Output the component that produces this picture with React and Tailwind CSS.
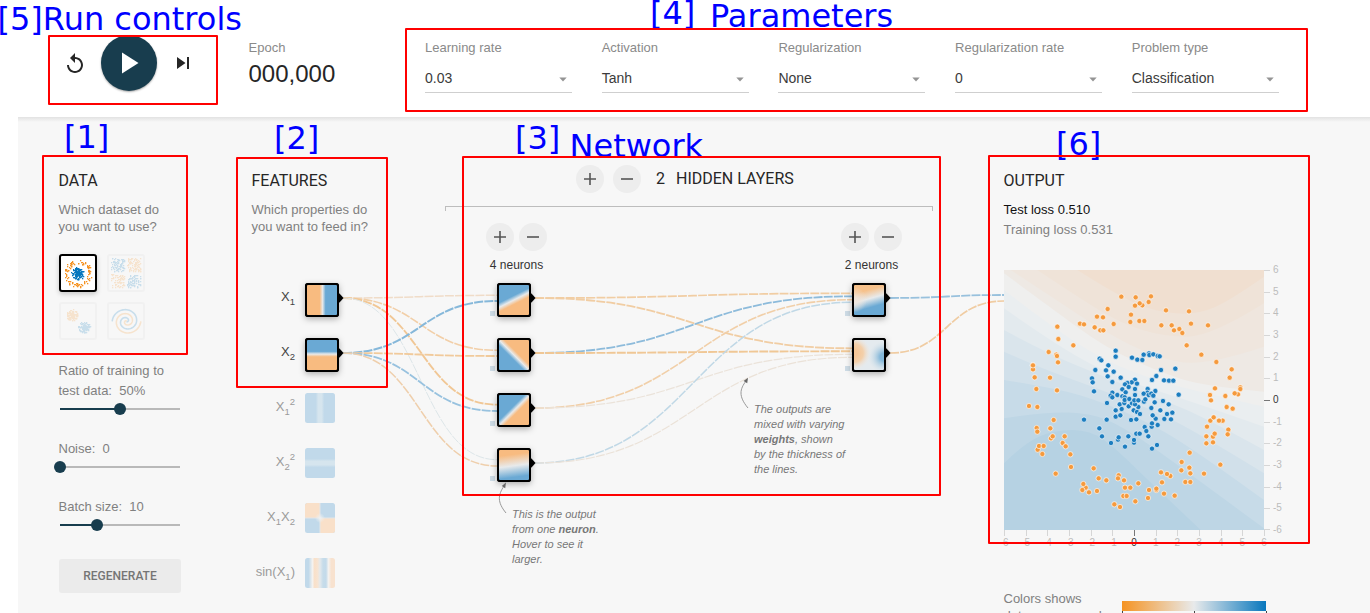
import React from "react";
import { MdReplay, MdPlayArrow, MdSkipNext } from "react-icons/md";

const BLUE = "#6aa9d4";
const ORANGE = "#f8bb80";
const PALE = "#e8eaeb";

/* ---------- helpers ---------- */

function randomSource(seed) {
  let s = seed;
  return () => {
    s = (s * 16807) % 2147483647;
    return s / 2147483647;
  };
}

function smoothPath(points) {
  let d = `M${points[0][0]} ${points[0][1]}`;
  for (let i = 1; i < points.length - 1; i++) {
    const [x, y] = points[i];
    const last = i === points.length - 2;
    const nx = last ? points[i + 1][0] : (x + points[i + 1][0]) / 2;
    const ny = last ? points[i + 1][1] : (y + points[i + 1][1]) / 2;
    d += `Q${x} ${y} ${nx} ${ny}`;
  }
  return d;
}

const link = (x1, y1, x2, y2) => {
  const m = (x1 + x2) / 2;
  return `M${x1} ${y1}C${m} ${y1} ${m} ${y2} ${x2} ${y2}`;
};

/* ---------- header ---------- */

const selects = [
  ["Learning rate", "0.03"],
  ["Activation", "Tanh"],
  ["Regularization", "None"],
  ["Regularization rate", "0"],
  ["Problem type", "Classification"],
];

function Header() {
  return (
    <header className="flex h-[117px] bg-white pl-[62.5px]">
      <div className="flex h-[126px] w-[186px] items-center">
        <MdReplay className="mt-[2px] size-6 text-[#262626]" />
        <div className="ml-[14.5px] flex size-14 items-center justify-center rounded-full bg-[#183d4e] shadow-[0_1px_2px_rgba(0,0,0,0.35)]">
          <MdPlayArrow className="mr-[2px] size-9 text-white" />
        </div>
        <MdSkipNext className="ml-[13.5px] size-6 text-[#262626]" />
      </div>
      <div className="w-[176.5px] pt-[40px]">
        <div className="text-[13px] leading-4 text-[#8a8a8a]">Epoch</div>
        <div className="mt-1 text-2xl leading-7 text-[#262626]">000,000</div>
      </div>
      <div className="flex gap-[29.7px] pt-[40px]">
        {selects.map(([label, value]) => (
          <div key={label} className="w-[147px]">
            <div className="text-[13px] leading-4 text-[#8a8a8a]">{label}</div>
            <div className="mt-[9px] flex h-7 items-center justify-between border-b border-[#cfcfcf] pr-[5px] pb-[2px] text-sm text-[#3b3b3b]">
              <span>{value}</span>
              <svg width="8" height="5" className="mt-[3px]">
                <path d="M0.3 0.5H7.7L4 4.5z" fill="#949494" />
              </svg>
            </div>
          </div>
        ))}
      </div>
    </header>
  );
}

/* ---------- data column ---------- */

function circleDots() {
  const r = randomSource(71);
  const out = [];
  for (let i = 0; i < 105; i++) {
    const a = r() * 6.283;
    const d = 9.6 + r() * 4.4;
    out.push([17.4 + d * Math.cos(a), 17.8 + d * Math.sin(a), "o"]);
  }
  for (let i = 0; i < 150; i++) {
    const a = r() * 6.283;
    const d = r() * 6.6;
    out.push([17.2 + d * Math.cos(a), 17.8 + d * Math.sin(a), "b"]);
  }
  return out;
}
function xorDots() {
  const r = randomSource(913);
  const out = [];
  for (let i = 0; i < 330; i++) {
    const qx = r() > 0.5;
    const qy = r() > 0.5;
    out.push([(qx ? 18.5 : 2.5) + r() * 13.5, (qy ? 18.5 : 2.5) + r() * 13.5, qx === qy ? "b" : "o"]);
  }
  return out;
}
function gaussDots() {
  const r = randomSource(37);
  const out = [];
  for (let i = 0; i < 260; i++) {
    const a = r() * 6.283;
    const d = r() * 5.8;
    const c = i % 2;
    out.push([(c ? 11.3 : 23.3) + d * Math.cos(a), (c ? 11.3 : 23.3) + d * Math.sin(a), c ? "o" : "b"]);
  }
  return out;
}
function spiralPath(phase) {
  let d = "";
  for (let i = 0; i <= 100; i++) {
    const u = i / 100;
    const t = phase + (1 - u) * 10.6;
    const x = 17.5 + 14.3 * u * Math.cos(t);
    const y = 17.3 + 13.6 * u * Math.sin(t);
    d += `${i ? "L" : "M"}${x.toFixed(2)} ${y.toFixed(2)}`;
  }
  return d;
}

const datasets = [circleDots(), xorDots(), gaussDots(), null];

function Thumb({ dots, active }) {
  return (
    <div
      className={
        active
          ? "size-[38px] rounded-[3px] border-2 border-black bg-white shadow-[0_2px_5px_rgba(0,0,0,0.2)]"
          : "size-[38px] rounded-[3px] border-2 border-[#f1f1f1]"
      }
    >
      <svg width="34" height="34" opacity={active ? 1 : 0.19}>
        {dots ? (
          dots.map(([x, y, c], i) => (
            <rect
              key={i}
              x={Math.round(x - 0.5)}
              y={Math.round(y - 0.5)}
              width={1.3}
              height={1.3}
              fill={c === "o" ? "#f59322" : "#0877bd"}
            />
          ))
        ) : (
          <g fill="none" strokeWidth="1.6">
            <path d={spiralPath(Math.PI)} stroke="#0877bd" />
            <path d={spiralPath(0)} stroke="#f59322" />
          </g>
        )}
      </svg>
    </div>
  );
}

function Slider({ value }) {
  return (
    <div className="ml-[1.5px] flex h-3 w-[120px] items-center">
      <div className="h-[2px] bg-[#183d4e]" style={{ width: value }} />
      <div className="z-10 -mx-[6px] size-3 shrink-0 rounded-full bg-[#183d4e]" />
      <div className="h-[2px] flex-1 bg-[#b9b9b9]" />
    </div>
  );
}

function DataColumn() {
  return (
    <section className="w-[193px] pt-[54px] pl-[0.5px] text-[13px] text-[#808080]">
      <h2 className="font-[Roboto,sans-serif] text-base leading-5 text-[#262626]">DATA</h2>
      <p className="mt-[10px] leading-[17px]">
        Which dataset do
        <br />
        you want to use?
      </p>
      <div className="mt-[19px] ml-[0.5px] grid w-[86px] grid-cols-[38px_38px] gap-[10px]">
        {datasets.map((d, i) => (
          <Thumb key={i} dots={d} active={i === 0} />
        ))}
      </div>
      <p className="mt-[21px] leading-5">
        Ratio of training to
        <br />
        test data:&nbsp; 50%
      </p>
      <div className="mt-[2px]">
        <Slider value={60} />
      </div>
      <p className="mt-6 leading-5">Noise:&nbsp; 0</p>
      <div className="mt-[2px]">
        <Slider value={0} />
      </div>
      <p className="mt-6 leading-5">Batch size:&nbsp; 10</p>
      <div className="mt-[2px]">
        <Slider value={37} />
      </div>
      <button className="mt-[28px] ml-[0.5px] block h-[34px] w-[122px] rounded-[3px] bg-[#ebebeb] font-[Roboto,sans-serif] text-xs font-medium text-[#757575]">
        REGENERATE
      </button>
    </section>
  );
}

/* ---------- hidden layer controls ---------- */

function RoundButton({ minus }) {
  return (
    <button className="flex size-7 items-center justify-center rounded-full bg-[#ededed]">
      <svg width="12" height="12" stroke="#555" strokeWidth="1.6">
        <path d={minus ? "M0 6H12" : "M0 6H12M6 0V12"} />
      </svg>
    </button>
  );
}

function LayerControls({ count }) {
  return (
    <div className="w-[61px]">
      <div className="flex gap-[5px]">
        <RoundButton />
        <RoundButton minus />
      </div>
      <div className="mt-[6px] text-center text-xs leading-4 whitespace-nowrap text-[#333]">{count} neurons</div>
    </div>
  );
}

function HiddenColumn() {
  return (
    <section className="w-[488px] pt-[48px]">
      <div className="flex items-center pl-[131px] font-[Roboto,sans-serif] text-base leading-7 text-[#262626]">
        <RoundButton />
        <span className="w-[9px]" />
        <RoundButton minus />
        <span className="ml-[15px]">2</span>
        <span className="ml-[11px]">HIDDEN LAYERS</span>
      </div>
      <div className="mt-[13px] h-[5px] border border-b-0 border-[#bdbdbd]" />
      <div className="mt-3 flex justify-between pr-[31px] pl-[41px]">
        <LayerControls count={4} />
        <LayerControls count={2} />
      </div>
    </section>
  );
}

/* ---------- network drawing (page coordinates) ---------- */

const links = [
  [343, 298, 497, 295.3, "#f0dcc8", 1.5],
  [343, 298, 497, 350.3, "#f2cfa8", 1.6],
  [343, 298, 497, 404.7, "#f1c795", 1.8],
  [343, 298, 497, 459.7, "#dde6e9", 1],
  [343, 353, 497, 301, "#86b8da", 2],
  [343, 353, 497, 356, "#f1ca9b", 1.8],
  [343, 353, 497, 411, "#98c2df", 1.8],
  [343, 353, 497, 466, "#efcfac", 1.5],
  [535, 298, 852, 293.3, "#f1cda3", 1.7],
  [535, 298, 852, 348.3, "#f1cda3", 1.8],
  [535, 353, 852, 296.3, "#8dbbdb", 1.8],
  [535, 353, 852, 351.3, "#f0c795", 1.9],
  [535, 408, 852, 299.7, "#f1cfa8", 1.6],
  [535, 408, 852, 354.3, "#ebe3da", 1.2],
  [535, 463, 852, 302.3, "#c0d8e6", 1.5],
  [535, 463, 852, 357.3, "#ebe2d8", 1.2],
  [890, 298, 1004, 295, "#98c1dd", 1.8],
  [890, 353, 1004, 301, "#f0cca2", 1.7],
];

const frames = [
  [305, 283, "x1"],
  [305, 338, "x2"],
  [497, 283, "n1"],
  [497, 338, "n2"],
  [497, 393, "n3"],
  [497, 448, "n4"],
  [852, 283, "o1"],
  [852, 338, "o2"],
];

const gradients = [
  ["x1", 0, 0, 30, 0, ORANGE, 0.42, 0.62, BLUE],
  ["x2", 0, 0, 0, 30, BLUE, 0.38, 0.56, ORANGE],
  ["n1", 9, 2, 21, 26, BLUE, 0.38, 0.68, ORANGE],
  ["n2", 4, 26, 26, 4, BLUE, 0.38, 0.62, ORANGE],
  ["n3", 4, 4, 26, 26, BLUE, 0.4, 0.62, ORANGE],
  ["n4", 13, 0, 17, 30, ORANGE, 0.15, 0.9, BLUE],
  ["o1", 11, 1, 19, 29, "#f6c18b", 0.16, 0.76, BLUE],
];

const inactive = [
  [393, "sq1"],
  [448, "sq2"],
  [503, "mul"],
  [558, "sin"],
];

function FeatureLabel({ y, children, dim }) {
  return (
    <text x="295" y={y} textAnchor="end" fontSize="13" fill={dim ? "#9b9b9b" : "#444"}>
      {children}
    </text>
  );
}

const Sub = ({ children }) => (
  <tspan dy="4" fontSize="9.5">
    {children}
  </tspan>
);

function Heat({ id }) {
  if (id === "o2")
    return (
      <g>
        <rect width="30" height="30" fill="#e4eaee" />
        <rect width="30" height="30" fill="url(#o2a)" />
        <rect width="30" height="30" fill="url(#o2b)" />
      </g>
    );
  return (
    <g>
      <rect width="30" height="30" fill={`url(#${id})`} />
      {id === "o1" && <rect width="30" height="30" fill="url(#o1b)" />}
    </g>
  );
}

function Network() {
  return (
    <svg
      className="pointer-events-none absolute top-0 left-0 font-['Liberation_Sans',Arial,sans-serif]"
      width="1370"
      height="613"
      viewBox="0 0 1370 613"
    >
      <defs>
        {gradients.map(([id, x1, y1, x2, y2, a, s, e, b]) => (
          <linearGradient key={id} id={id} gradientUnits="userSpaceOnUse" x1={x1} y1={y1} x2={x2} y2={y2}>
            <stop offset={s} stopColor={a} />
            <stop offset={(s + e) / 2} stopColor={PALE} />
            <stop offset={e} stopColor={b} />
          </linearGradient>
        ))}
        <radialGradient id="o1b" gradientUnits="userSpaceOnUse" cx="0" cy="15" r="13">
          <stop offset="0" stopColor="#efe6dd" />
          <stop offset="1" stopColor="#efe6dd" stopOpacity="0" />
        </radialGradient>
        <radialGradient id="o2a" gradientUnits="userSpaceOnUse" cx="0" cy="13" r="17">
          <stop offset="0.2" stopColor="#f5c697" />
          <stop offset="0.55" stopColor="#f3d0ab" />
          <stop offset="1" stopColor="#eee9e4" stopOpacity="0" />
        </radialGradient>
        <radialGradient id="o2b" gradientUnits="userSpaceOnUse" cx="30" cy="17" r="16">
          <stop offset="0.25" stopColor="#83b7d9" />
          <stop offset="1" stopColor="#d5e2ea" stopOpacity="0" />
        </radialGradient>
        <linearGradient id="sin">
          <stop offset="0.12" stopColor="#c1d9ea" />
          <stop offset="0.25" stopColor="#f4f2ef" />
          <stop offset="0.32" stopColor="#f9e0c9" />
          <stop offset="0.42" stopColor="#f7e4d2" />
          <stop offset="0.5" stopColor="#e4e9ec" />
          <stop offset="0.6" stopColor="#c6dcea" />
          <stop offset="0.7" stopColor="#c3daea" />
          <stop offset="0.78" stopColor="#f3f2f0" />
          <stop offset="0.88" stopColor="#f8e2cf" />
        </linearGradient>
        <linearGradient id="band">
          <stop offset="0.36" stopColor="#c1d9ea" />
          <stop offset="0.44" stopColor="#d6e5ee" />
          <stop offset="0.56" stopColor="#d6e5ee" />
          <stop offset="0.64" stopColor="#c1d9ea" />
        </linearGradient>
        <radialGradient id="mid">
          <stop offset="0" stopColor="#eef0f0" />
          <stop offset="1" stopColor="#eef0f0" stopOpacity="0" />
        </radialGradient>
        <clipPath id="rounded">
          <rect width="30" height="30" rx="2.5" />
        </clipPath>
      </defs>

      <g fill="none" strokeDasharray="9 1.2">
        {links.map(([x1, y1, x2, y2, c, w], i) => (
          <path key={i} d={link(x1, y1, x2, y2)} stroke={c} strokeWidth={w} />
        ))}
      </g>

      {frames.map(([x, y, id]) => (
        <g key={id} transform={`translate(${x} ${y})`}>
          {x > 400 && <rect x="-7" y="28" width="5" height="5" fill="#cddbe5" />}
          <rect width="34" height="34" rx="3" className="drop-shadow-[0_2px_3px_rgba(0,0,0,0.3)]" />
          <path d="M33 10.5H34.5L38.5 15L34.5 19.5H33z" />
          <g transform="translate(2 2)">
            <Heat id={id} />
          </g>
          <rect x="1" y="1" width="32" height="32" rx="2" fill="none" stroke="#000" strokeWidth="2" />
        </g>
      ))}

      {inactive.map(([y, id]) => (
        <g key={id} transform={`translate(305 ${y})`} clipPath="url(#rounded)">
          {id === "sq1" && <rect width="30" height="30" fill="url(#band)" />}
          {id === "sq2" && <rect width="30" height="30" fill="url(#band)" transform="rotate(90 15 15)" />}
          {id === "sin" && <rect width="30" height="30" fill="url(#sin)" />}
          {id === "mul" && (
            <g>
              <rect width="30" height="30" fill="#c1d9ea" />
              <path d="M0 0H15V15H0zM15 15H30V30H15z" fill="#f9e0c9" />
              <path d="M15 0V30M0 15H30" stroke="#e3e6e8" strokeWidth="1" />
              <circle cx="15" cy="15" r="5" fill="url(#mid)" />
            </g>
          )}
        </g>
      ))}

      <FeatureLabel y={301}>X<Sub>1</Sub></FeatureLabel>
      <FeatureLabel y={356}>X<Sub>2</Sub></FeatureLabel>
      <FeatureLabel y={411} dim>X<Sub>1</Sub><tspan dy="-10" fontSize="9.5">2</tspan></FeatureLabel>
      <FeatureLabel y={466} dim>X<Sub>2</Sub><tspan dy="-10" fontSize="9.5">2</tspan></FeatureLabel>
      <FeatureLabel y={521} dim>X<Sub>1</Sub><tspan dy="-4">X</tspan><Sub>2</Sub></FeatureLabel>
      <FeatureLabel y={576} dim>sin(X<Sub>1</Sub><tspan dy="-4">)</tspan></FeatureLabel>

      <g fill="none" stroke="#999" strokeWidth="1">
        <path d="M506 513C497 502 498 495 504 486" />
        <path d="M748 408C738 396 740 389 746 381" />
      </g>
      <path d="M506 482.5L505.2 488.3L501.8 486z" fill="#666" />
      <path d="M748 377.8L747.2 383.3L743.6 381z" fill="#666" />
    </svg>
  );
}

/* ---------- output column ---------- */

const bands = [
  ["#bed6e5", [[0, 580], [60, 520], [150, 480], [260, 480], [340, 540], [400, 600], [590, 780]]],
  ["#c7dbe8", [[0, 445], [128, 425], [258, 430], [348, 465], [488, 560], [780, 775]]],
  ["#d1e0ea", [[0, 330], [128, 350], [250, 380], [400, 440], [560, 530], [780, 690]]],
  ["#dae5ec", [[0, 245], [100, 290], [250, 345], [400, 400], [560, 475], [780, 610]]],
  ["#e3eaee", [[0, 180], [130, 250], [300, 320], [450, 380], [600, 440], [780, 540]]],
  ["#eaeef0", [[0, 115], [100, 185], [250, 280], [400, 345], [550, 390], [780, 470]]],
  ["#efefee", [[0, 60], [130, 160], [280, 260], [420, 320], [600, 370], [780, 410]]],
  ["#eee9e4", [[0, 10], [150, 120], [300, 230], [450, 300], [600, 350], [780, 365]]],
  ["#efe6de", [[20, 0], [150, 85], [300, 185], [450, 260], [600, 290], [780, 230]]],
  ["#efe3d8", [[100, 0], [220, 80], [350, 160], [480, 200], [620, 200], [780, 100]]],
  ["#f0dfd0", [[220, 0], [330, 70], [450, 125], [580, 135], [680, 90], [780, 20]]],
];

const orangeUpper = [[424,440],[467,442],[513,439],[506,456],[487,466],[479,460],[465,467],[383,477],[558,481],[627,484],[453,494],[351,500],[369,502],[451,516],[478,513],[493,513],[300,521],[312,523],[401,522],[344,532],[361,541],[370,541],[232,530],[235,567],[280,586],[206,606],[229,614],[231,618],[234,637],[158,646],[159,658],[159,646],[164,682],[210,683],[169,717],[231,721],[544,526],[575,526],[582,541],[598,537],[607,549],[633,521],[684,526],[620,586],[664,614],[709,636],[755,658],[749,683],[781,712],[781,717],[774,733],[764,730],[736,738],[705,715],[690,735]];
const blueUpper = [[407,602],[407,620],[359,626],[364,631],[385,646],[346,660],[378,661],[401,665],[383,679],[422,683],[456,623],[472,629],[487,630],[491,614],[507,610],[508,615],[520,613],[533,618],[539,619],[543,660],[586,656],[529,678],[516,690],[552,691],[567,692],[580,692],[336,685],[338,697],[342,724],[397,696],[596,734],[465,689],[455,697],[442,699],[471,701],[435,703],[446,711],[427,718],[465,717],[437,727],[397,728],[392,737],[397,742],[412,735],[427,739],[434,742],[465,735],[503,717],[502,728],[491,731],[506,735],[526,723],[514,731],[520,737]];
const orangeLower = [[147,108],[172,111],[221,150],[170,174],[172,185],[211,175],[213,205],[218,199],[254,199],[248,219],[257,229],[173,239],[177,228],[191,228],[187,252],[271,253],[273,291],[227,311],[341,295],[356,325],[379,331],[416,316],[414,325],[432,331],[317,353],[310,342],[307,360],[327,367],[351,363],[435,353],[451,353],[475,340],[430,378],[440,378],[466,394],[403,403],[420,411],[504,384],[507,360],[529,360],[529,356],[546,337],[543,307],[571,318],[561,312],[552,371],[584,377],[604,301],[605,276],[628,293],[629,248],[631,310],[616,336],[631,336],[672,311],[721,284],[679,220],[699,217],[699,200],[704,191],[679,199],[681,170],[691,152],[701,142],[728,152],[717,152],[745,179],[743,193],[740,111],[758,116],[693,91]];
const blueLower = [[312,149],[381,99],[380,149],[358,175],[366,199],[393,219],[414,209],[416,202],[445,199],[435,230],[462,218],[462,210],[469,191],[479,191],[494,171],[499,183],[505,199],[516,236],[531,225],[527,146],[533,165],[515,170],[516,160],[518,136],[514,114],[524,97],[541,121],[549,93],[566,103],[561,132],[577,128],[553,147],[573,148],[407,121],[425,117],[419,103],[407,140],[421,136],[453,150],[469,148],[461,121],[471,126],[480,132],[475,111],[446,109],[433,99],[434,90],[448,87],[456,100],[465,103],[463,91],[475,91],[492,95],[496,88]];

function Points({ list, fill }) {
  return list.map(([x, y], i) => (
    <circle key={i} cx={x} cy={y} r="7.9" fill={fill} stroke="#fff" strokeOpacity="0.8" strokeWidth="2.4" />
  ));
}

const ticks = [6, 5, 4, 3, 2, 1, 0, -1, -2, -3, -4, -5, -6];

function Plot() {
  return (
    <svg width="300" height="285" viewBox="0 0 300 285" fontSize="10" className="mt-[30px] block overflow-visible">
      <svg width="260" height="260" viewBox="0 0 780 780">
        <rect width="780" height="780" fill="#b6d2e3" />
        {bands.map(([c, pts], i) => (
          <path key={c} d={smoothPath(pts) + (i === 0 ? "H780V0H0z" : "V0H0z")} fill={c} />
        ))}
        <g transform="translate(-72 -360)">
          <Points list={orangeUpper} fill="#f59a3d" />
          <Points list={blueUpper} fill="#1c7dbf" />
        </g>
        <g transform="translate(-72 300)">
          <Points list={orangeLower} fill="#f59a3d" />
          <Points list={blueLower} fill="#1c7dbf" />
        </g>
      </svg>
      {ticks.map((t) => {
        const y = 130 - (t * 260) / 12;
        const x = 130 + (t * 260) / 12;
        const line = t === 0 ? "#777" : "#d6d6d6";
        const ink = t === 0 ? "#333" : "#bcbcbc";
        return (
          <g key={t} fill={ink}>
            <path
              d={`M260 ${Math.min(259, Math.round(y)) + 0.5}h6M${Math.round(x) + 0.5} 260v6`}
              stroke={line}
              strokeWidth="1"
            />
            <text x="269" y={y + 3}>{t}</text>
            <text x={x} y="276" textAnchor="middle">{t}</text>
          </g>
        );
      })}
    </svg>
  );
}

function OutputColumn() {
  return (
    <section className="ml-[70.5px] w-[320px] pt-[54px] text-[13px]">
      <h2 className="font-[Roboto,sans-serif] text-base leading-5 text-[#262626]">OUTPUT</h2>
      <p className="mt-[9px] leading-5 text-[#111]">Test loss 0.510</p>
      <p className="leading-5 text-[#808080]">Training loss 0.531</p>
      <div className="pl-[0.5px]">
        <Plot />
      </div>
      <div className="mt-[35px] flex text-[#808080]">
        <p className="w-[118.5px] leading-[17px] whitespace-nowrap">
          Colors shows
          <br />
          data, neuron and
        </p>
        <div className="mt-[11px] w-[145px]">
          <div className="h-[10px] w-36 bg-[linear-gradient(to_right,#f59322,#e8eaeb,#0877bd)]" />
          <div className="flex h-2 justify-between">
            <span className="w-px bg-[#444]" />
            <span className="w-px bg-[#444]" />
            <span className="w-px bg-[#444]" />
          </div>
        </div>
      </div>
    </section>
  );
}

/* ---------- annotations laid over the page ---------- */

function Annotations() {
  return (
    <div className="pointer-events-none absolute inset-0 font-['DejaVu_Sans',sans-serif] text-[32px] leading-8 whitespace-pre text-[#0000ff]">
      <div className="absolute top-[3px] left-[-2.5px]">[5]Run controls</div>
      <div className="absolute top-[-3px] left-[650px]">[4]</div>
      <div className="absolute top-[0px] left-[710px]">Parameters</div>
      <div className="absolute top-[121px] left-[64px]">[1]</div>
      <div className="absolute top-[122px] left-[274px]">[2]</div>
      <div className="absolute top-[122px] left-[515px]">[3]</div>
      <div className="absolute top-[130px] left-[569.5px]">Network</div>
      <div className="absolute top-[128px] left-[1056px]">[6]</div>
      <div className="absolute top-[35px] left-[48px] h-[70px] w-[170px] rounded-[1px] border-2 border-[#ff0000]" />
      <div className="absolute top-[28px] left-[405px] h-[84px] w-[903px] rounded-[1px] border-2 border-[#ff0000]" />
      <div className="absolute top-[155px] left-[42px] h-[200px] w-[146px] rounded-[1px] border-2 border-[#ff0000]" />
      <div className="absolute top-[157px] left-[236px] h-[231px] w-[152px] rounded-[1px] border-2 border-[#ff0000]" />
      <div className="absolute top-[156px] left-[462px] h-[340px] w-[479px] rounded-[1px] border-2 border-[#ff0000]" />
      <div className="absolute top-[155px] left-[988px] h-[389px] w-[322px] rounded-[1px] border-2 border-[#ff0000]" />
    </div>
  );
}

export default function App() {
  return (
    <div className="relative h-[613px] w-[1370px] overflow-hidden bg-white font-['Liberation_Sans',Arial,sans-serif]">
      <Header />
      <main className="ml-[18px] flex h-[496px] bg-[#f7f7f7] bg-[linear-gradient(to_bottom,#e2e2e2,#f7f7f7_5px)] pl-10">
        <DataColumn />
        <section className="w-[194px] pt-[54px] pl-[0.5px] text-[13px] text-[#808080]">
          <h2 className="font-[Roboto,sans-serif] text-base leading-5 text-[#262626]">FEATURES</h2>
          <p className="mt-[10px] leading-[17px]">
            Which properties do
            <br />
            you want to feed in?
          </p>
        </section>
        <HiddenColumn />
        <OutputColumn />
      </main>
      <Network />
      <div className="absolute top-[507px] left-[512px] text-[11px] leading-[15px] whitespace-nowrap text-[#777] italic">
        This is the output
        <br />
        from one <b>neuron</b>.
        <br />
        Hover to see it
        <br />
        larger.
      </div>
      <div className="absolute top-[402px] left-[754px] text-[11px] leading-[15px] whitespace-nowrap text-[#777] italic">
        The outputs are
        <br />
        mixed with varying
        <br />
        <b>weights</b>, shown
        <br />
        by the thickness of
        <br />
        the lines.
      </div>
      <Annotations />
    </div>
  );
}
